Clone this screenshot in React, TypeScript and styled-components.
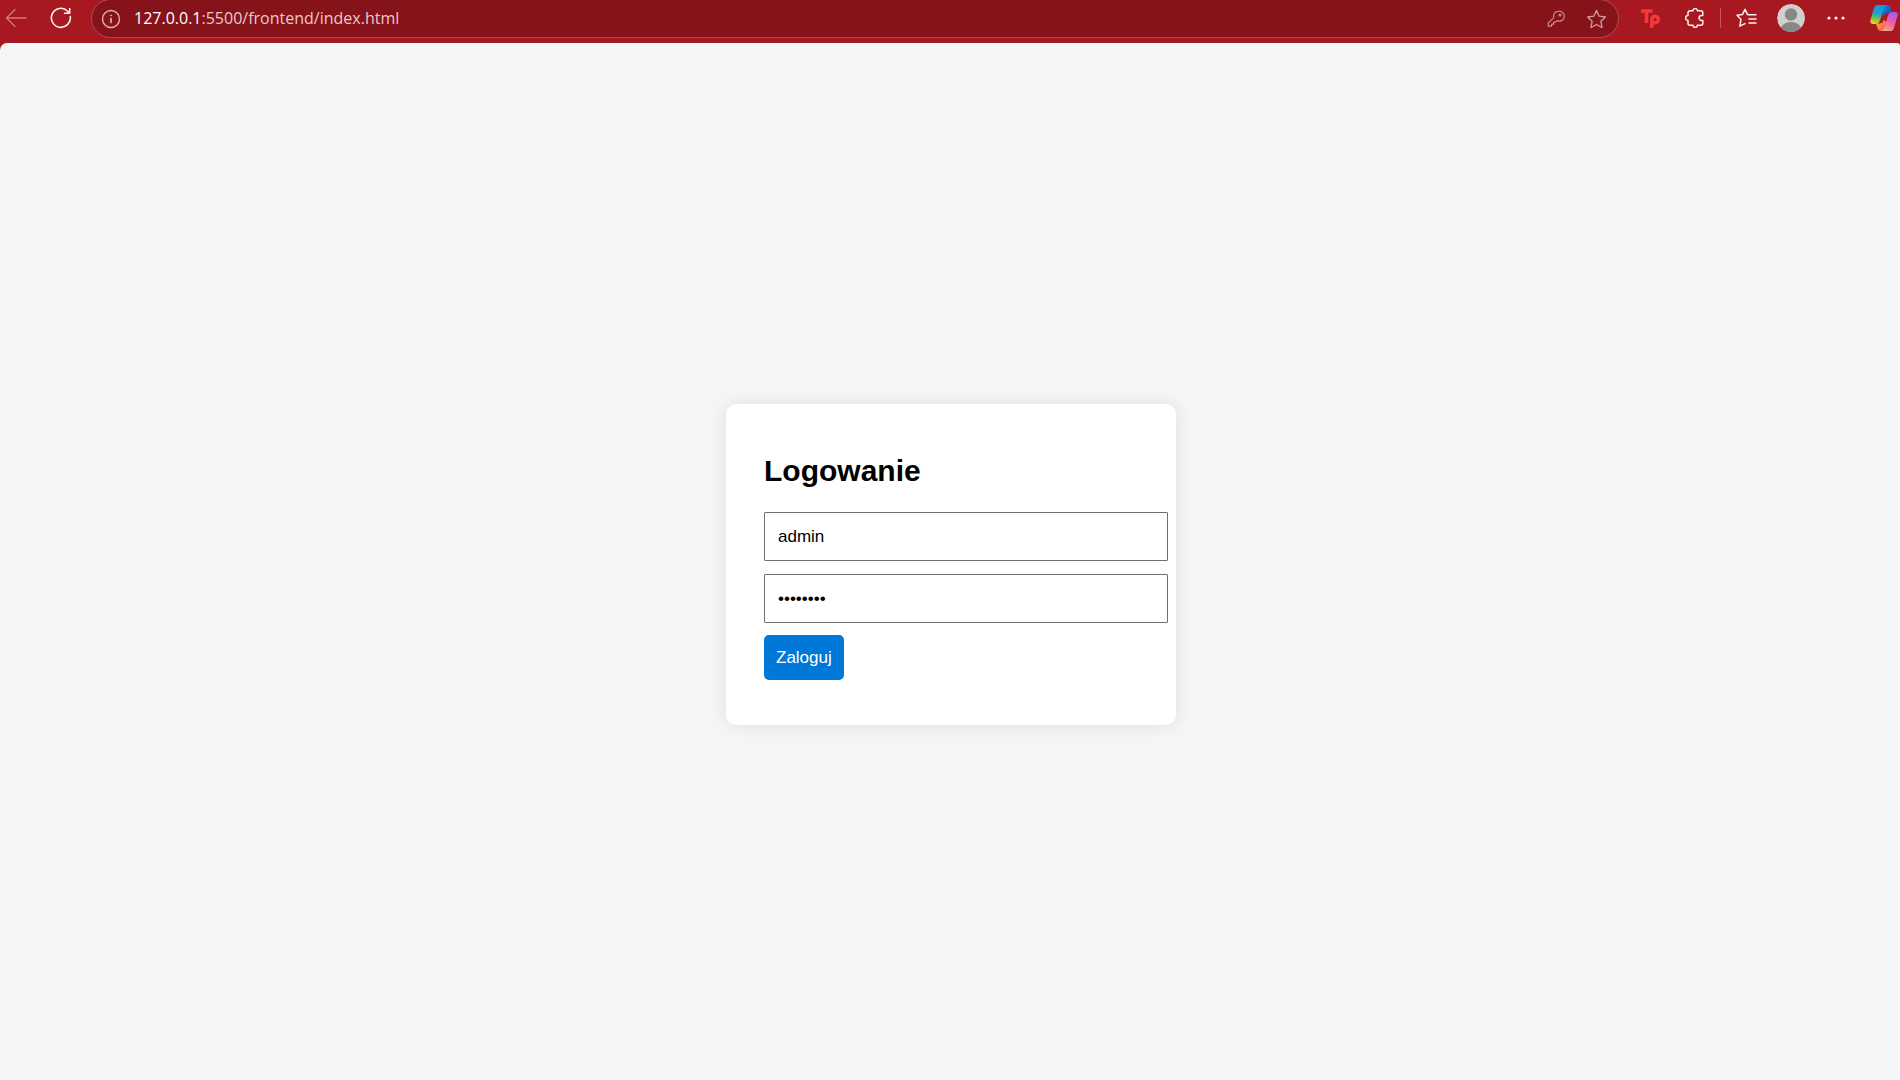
import React from "react";
import styled, { createGlobalStyle } from "styled-components";

const GlobalStyle = createGlobalStyle`
  *, *::before, *::after { box-sizing: border-box; }
  body {
    margin: 0;
    background: #a81820;
    font-family: "Liberation Sans", Arial, sans-serif;
  }
`;

const Window = styled.div`
  display: flex;
  flex-direction: column;
  min-height: 100vh;
  overflow: hidden;
`;

const Toolbar = styled.header`
  display: flex;
  align-items: flex-start;
  height: 43px;
  margin-right: -8px;
  background: #a81820;
`;

const IconButton = styled.button<{ $width: number; $color?: string }>`
  display: flex;
  flex: none;
  align-items: center;
  justify-content: center;
  width: ${(p) => p.$width}px;
  height: 36px;
  padding: 0;
  border: 0;
  background: none;
  color: ${(p) => p.$color ?? "#fbeff0"};
`;

const AddressBar = styled.div`
  display: flex;
  flex: 1;
  align-items: center;
  height: 39px;
  margin: -1px 10px 0 1px;
  padding-right: 2px;
  border: 1px solid #b04d54;
  border-radius: 20px;
  background: #86121a;
`;

const Address = styled.a`
  flex: 1;
  padding: 0 0 2px 4px;
  color: #ecc8cb;
  font: 16px/24px "Open Sans", "Noto Sans", sans-serif;
  text-decoration: none;
`;

const Host = styled.span`
  color: #fff;
`;

const Divider = styled.span`
  flex: none;
  width: 1px;
  height: 20px;
  margin: 8px 1px 0;
  background: #c4575d;
`;

const Page = styled.main`
  display: flex;
  flex: 1;
  align-items: center;
  justify-content: center;
  padding: 6px 0 0 2px;
  border-radius: 7px 3px 0 0;
  background: #f4f6f8;
`;

const Card = styled.form`
  width: 450px;
  padding: 38px;
  border-radius: 10px;
  background: #fff;
  box-shadow: 0 0 19px rgba(0, 0, 0, 0.1);
`;

const Title = styled.h2`
  margin: 12px 0 24px;
  color: #000;
  font-size: 30px;
  line-height: 34px;
`;

const Fields = styled.div`
  display: grid;
  gap: 13px;
  margin-bottom: 12px;
`;

const Field = styled.input`
  width: 404px;
  height: 49px;
  padding: 12px 13px;
  border: 1px solid #6f6f6f;
  border-radius: 1px;
  background: #fff;
  color: #000;
  font: 17px/20px "Liberation Sans", Arial, sans-serif;
`;

const SubmitButton = styled.button`
  display: block;
  height: 45px;
  margin: 0 0 7px;
  padding: 0 12px;
  border: 0;
  border-radius: 5px;
  background: #0078d7;
  color: #fff;
  font: 17px/20px "Liberation Sans", Arial, sans-serif;
`;

const stroke = {
  fill: "none",
  stroke: "currentColor",
  strokeLinecap: "round" as const,
  strokeLinejoin: "round" as const,
};

const BackIcon = () => (
  <svg width="22" height="20" viewBox="0 0 22 20" {...stroke} strokeWidth="1.3">
    <path d="M21 10H2M10 1.5 1.5 10l8.500 8.500" />
  </svg>
);

const ReloadIcon = () => (
  <svg width="22" height="22" viewBox="0 0 22 22" {...stroke} strokeWidth="1.6">
    <path d="M20.300 9.500A9.500 9.500 0 1 1 17.700 4.200L19 6M19.700 1.500V6.300H14.500" />
  </svg>
);

const InfoIcon = () => (
  <svg width="20" height="20" viewBox="0 0 20 20" {...stroke} strokeWidth="1.4">
    <circle cx="10" cy="10" r="8.500" />
    <path d="M10 9.500v4" strokeWidth="1.700" />
    <circle cx="10" cy="6.500" r="0.600" fill="currentColor" strokeWidth="0.8" />
  </svg>
);

const KeyIcon = () => (
  <svg width="18" height="18" viewBox="0 0 18 18" {...stroke} strokeWidth="1.200">
    <path d="M11.600 1.200a5 5 0 0 0-4.800 6.400L1.300 13v3.200h3.300v-2h2v-2h1.600l1.700-1.600a5 5 0 1 0 1.700-9.400Z" />
    <circle cx="13" cy="5" r="1" />
  </svg>
);

const starPath =
  "M10.500 1.500l2.700 5.700 6.200.8-4.500 4.300 1.100 6.200-5.500-3-5.500 3 1.100-6.200L1.600 8l6.200-.8Z";

const StarIcon = () => (
  <svg width="21" height="20" viewBox="0 0 21 20" {...stroke} strokeWidth="1.300">
    <path d={starPath} />
  </svg>
);

const TpIcon = () => (
  <svg width="19" height="19" viewBox="0 0 19 19" fill="none" stroke="#f73838" strokeWidth="3.600">
    <path d="M0 2h11.500M5.500 2v12" />
    <path d="M10.800 19V10.500a3.300 3.300 0 1 1 3.300 3.300h-2" strokeWidth="3.400" />
  </svg>
);

const PuzzleIcon = () => (
  <svg width="20" height="20" viewBox="0 0 20 20" {...stroke} strokeWidth="1.500">
    <path d="M5 2.800h3a2.200 2.200 0 0 1 4.400 0h3.400a2 2 0 0 1 2 2v2.800h-1.300a2.400 2.400 0 0 0 0 4.800h1.300v2.800a2 2 0 0 1-2 2h-3.400a2.200 2.200 0 0 1-4.400 0H5a2 2 0 0 1-2-2v-2.800a2.400 2.400 0 0 1 0-4.800V4.800a2 2 0 0 1 2-2Z" />
  </svg>
);

const FavoritesIcon = () => (
  <svg width="21" height="20" viewBox="0 0 21 20" {...stroke} strokeWidth="1.500">
    <path d="M12.800 6.800 11.600 6.600 9 1.300 6.400 6.600 1 7.300l4 4.100L3.800 18.200 9 15.600M13 6.800h7M13 11h7M13 15h7" />
  </svg>
);

const AvatarIcon = () => (
  <svg width="28" height="28" viewBox="0 0 28 28">
    <defs>
      <clipPath id="avatar-clip"><circle cx="14" cy="14" r="14" /></clipPath>
    </defs>
    <g clipPath="url(#avatar-clip)">
      <circle cx="14" cy="14" r="14" fill="#d2d0ce" />
      <circle cx="14" cy="10.500" r="6.200" fill="#8a8886" />
      <ellipse cx="14" cy="26" rx="10.500" ry="8" fill="#8a8886" />
    </g>
  </svg>
);

const MoreIcon = () => (
  <svg width="18" height="4" viewBox="0 0 18 4" fill="currentColor">
    <circle cx="2" cy="2" r="1.600" />
    <circle cx="9" cy="2" r="1.600" />
    <circle cx="16" cy="2" r="1.600" />
  </svg>
);

const CopilotIcon = () => (
  <svg width="28" height="26" viewBox="0 0 28 26">
    <defs>
      <linearGradient id="cp-left" x1="0.500" y1="0" x2="0.300" y2="1">
        <stop offset="0" stopColor="#1594ee" />
        <stop offset="0.450" stopColor="#18a5c4" />
        <stop offset="0.700" stopColor="#70bd58" />
        <stop offset="1" stopColor="#f4d516" />
      </linearGradient>
      <linearGradient id="cp-right" x1="0.700" y1="0" x2="0.300" y2="1">
        <stop offset="0" stopColor="#a75aef" />
        <stop offset="0.500" stopColor="#ed5ba9" />
        <stop offset="1" stopColor="#ffa07b" />
      </linearGradient>
      <linearGradient id="cp-top" x1="0" y1="0" x2="1" y2="1">
        <stop offset="0" stopColor="#168ded" />
        <stop offset="1" stopColor="#1742ad" />
      </linearGradient>
      <linearGradient id="cp-bottom" x1="0" y1="0" x2="1" y2="1">
        <stop offset="0" stopColor="#ffc52a" />
        <stop offset="1" stopColor="#ed3d57" />
      </linearGradient>
    </defs>
    <path d="M11 0h6c2 0 3 1 3.500 3l1.500 4.500h-3c-3 0-4 1-5 4L11 7Z" fill="url(#cp-top)" />
    <path d="M17 26h-6c-2 0-3-1-3.500-3L6 18.500h3c3 0 4-1 5-4l3 4Z" fill="url(#cp-bottom)" />
    <path d="M7 0h10c-2 .5-2.700 2-3.300 4L10 15.500c-.8 2.300-2 3.500-4.500 3.500H3c-2 0-3.200-1.500-2.600-3.500L4 3C4.700 1 5.500 0 7 0Z" fill="url(#cp-left)" />
    <path d="M21 26H11c2-.5 2.700-2 3.300-4L18 10.500C18.800 8.200 20 7 22.500 7H25c2 0 3.200 1.500 2.600 3.500L24 23c-.7 2-1.500 3-3 3Z" fill="url(#cp-right)" />
  </svg>
);

export default function App() {
  return (
    <Window>
      <GlobalStyle />
      <Toolbar>
        <IconButton $width={32} $color="#d07a80" aria-label="Back"><BackIcon /></IconButton>
        <IconButton $width={58} aria-label="Reload"><ReloadIcon /></IconButton>
        <AddressBar>
          <IconButton $width={38} $color="#dfb0b4" aria-label="Site information"><InfoIcon /></IconButton>
          <Address href="#">
            <Host>127.0.0.1</Host>:5500/frontend/index.html
          </Address>
          <IconButton $width={40} $color="#c98a8f" aria-label="Passwords"><KeyIcon /></IconButton>
          <IconButton $width={40} $color="#d59a9f" aria-label="Add to favorites"><StarIcon /></IconButton>
        </AddressBar>
        <IconButton $width={42} aria-label="Tp extension"><TpIcon /></IconButton>
        <IconButton $width={48} aria-label="Extensions"><PuzzleIcon /></IconButton>
        <Divider />
        <IconButton $width={48} aria-label="Favorites"><FavoritesIcon /></IconButton>
        <IconButton $width={42} aria-label="Profile"><AvatarIcon /></IconButton>
        <IconButton $width={48} aria-label="Settings and more"><MoreIcon /></IconButton>
        <IconButton $width={48} aria-label="Copilot"><CopilotIcon /></IconButton>
      </Toolbar>
      <Page>
        <Card onSubmit={(e) => e.preventDefault()}>
          <Title>Logowanie</Title>
          <Fields>
            <Field type="text" aria-label="Login" defaultValue="admin" />
            <Field type="password" aria-label="Hasło" defaultValue="admin123" />
          </Fields>
          <SubmitButton type="submit">Zaloguj</SubmitButton>
        </Card>
      </Page>
    </Window>
  );
}
